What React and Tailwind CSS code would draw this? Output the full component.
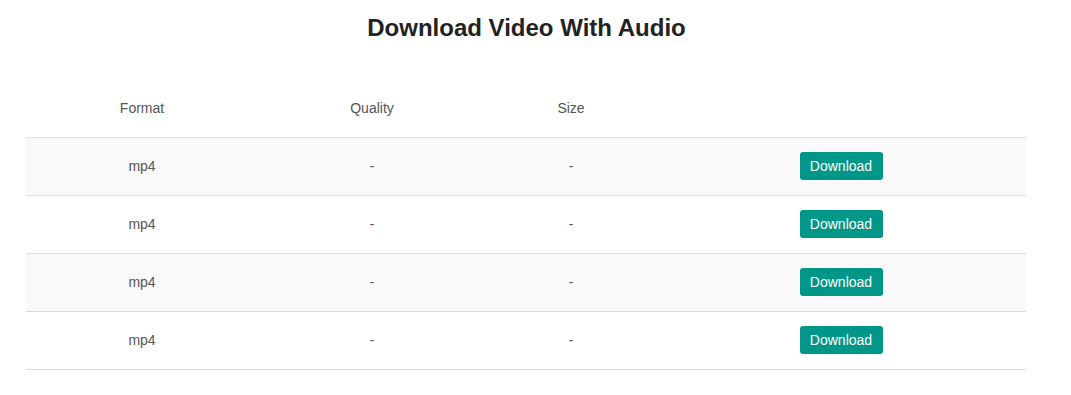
import React from 'react';

const rows = [
  { format: 'mp4', quality: '-', size: '-' },
  { format: 'mp4', quality: '-', size: '-' },
  { format: 'mp4', quality: '-', size: '-' },
  { format: 'mp4', quality: '-', size: '-' },
];

const App = () => {
  return (
    <div className="bg-white min-h-[395px] font-['Liberation_Sans',Arial,sans-serif] text-[14px] text-[#555]">
      <h2 className="pt-[14px] pr-[18px] text-center text-[24px] leading-[28px] font-bold text-[#222]">
        Download Video With Audio
      </h2>

      <div className="px-[26px] mt-[37px]">
        <table className="w-[1000px] table-fixed border-collapse">
          <thead>
            <tr className="h-[58px] border-b border-[#ddd]">
              <th className="w-[232px] pt-[2px] font-normal text-center">Format</th>
              <th className="w-[228px] pt-[2px] font-normal text-center">Quality</th>
              <th className="w-[170px] pt-[2px] font-normal text-center">Size</th>
              <th className="w-[370px]"></th>
            </tr>
          </thead>
          <tbody>
            {rows.map((row, i) => (
              <tr
                key={i}
                className={`h-[58px] border-b border-[#ddd] ${i % 2 === 0 ? 'bg-[#f9f9f9]' : 'bg-white'}`}
              >
                <td className="text-center">{row.format}</td>
                <td className="text-center">{row.quality}</td>
                <td className="text-center">{row.size}</td>
                <td className="text-center">
                  <button className="w-[83px] h-[28px] rounded-[3px] bg-[#009688] text-white text-[14px]">
                    Download
                  </button>
                </td>
              </tr>
            ))}
          </tbody>
        </table>
      </div>
    </div>
  );
};

export default App;
